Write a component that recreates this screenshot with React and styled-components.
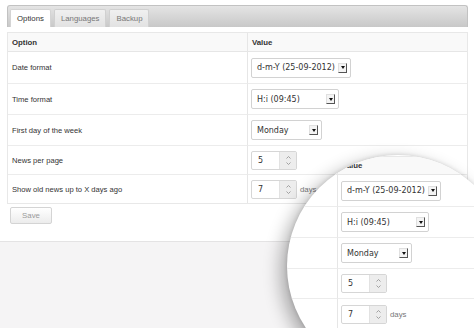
import React from 'react';
import styled, { createGlobalStyle } from 'styled-components';

const GlobalStyle = createGlobalStyle`
  html, body {
    margin: 0;
    padding: 0;
    background: #f5f4f5;
  }
  body {
    font-family: "Liberation Sans", Arial, sans-serif;
    color: #333;
    width: 474px;
    height: 328px;
    overflow: hidden;
    position: relative;
  }
`;

const Panel = styled.div`
  background: #fff;
  height: 242px;
  box-sizing: border-box;
  padding: 5px 6px 0 7px;
  border-bottom: 1px solid #e4e3e4;
`;

const TabBar = styled.div`
  display: flex;
  align-items: flex-end;
  gap: 3px;
  height: 22px;
  box-sizing: border-box;
  padding-left: 2px;
  border: 1px solid #c2c2c2;
  border-bottom: none;
  border-radius: 3px 3px 0 0;
  background: linear-gradient(#e4e4e4, #c8c8c8);
`;

const Tab = styled.div`
  height: 18px;
  box-sizing: border-box;
  padding: 0 6px;
  display: flex;
  align-items: center;
  font-size: 7.8px;
  color: ${p => (p.$active ? '#333' : '#777')};
  background: ${p => (p.$active ? '#fff' : 'linear-gradient(#f0f0f0, #e2e2e2)')};
  border: 1px solid ${p => (p.$active ? '#d4d4d4' : '#d0d0d0')};
  border-bottom: none;
  border-radius: 2px 2px 0 0;
`;

const Table = styled.div`
  display: grid;
  grid-template-columns: ${p => p.$first}px 1fr;
  margin-top: ${p => p.$top || 0}px;
  border: 1px solid #e8e8e8;
  border-right: ${p => (p.$open ? 'none' : '1px solid #e8e8e8')};
  border-left: ${p => (p.$open ? 'none' : '1px solid #e8e8e8')};
`;

const HeadCell = styled.div`
  height: ${p => p.$h || 18}px;
  box-sizing: border-box;
  display: flex;
  align-items: center;
  padding-left: 4px;
  font-size: 7.8px;
  font-weight: bold;
  color: #333;
  background: #f9f9f9;
  border-bottom: 1px solid #e6e6e6;
  & + & {
    border-left: 1px solid #e6e6e6;
  }
`;

const Cell = styled.div`
  height: ${p => p.$h}px;
  box-sizing: border-box;
  display: flex;
  align-items: center;
  gap: 3px;
  padding-left: ${p => (p.$value ? 3 : 4)}px;
  font-size: 7.6px;
  color: #333;
  border-top: ${p => (p.$first ? 'none' : '1px solid #ececec')};
  border-left: ${p => (p.$value ? '1px solid #e6e6e6' : 'none')};
`;

const SelectBox = styled.div`
  width: ${p => p.$w}px;
  height: 20px;
  box-sizing: border-box;
  display: flex;
  align-items: center;
  padding: 0 3px 0 5px;
  border: 1px solid #d2d2d2;
  border-radius: 2px;
  background: #fff;
  font-family: "DejaVu Sans", Verdana, sans-serif;
  font-size: 8px;
  color: #333;
  white-space: nowrap;
`;

const DropArrow = styled.span`
  margin-left: auto;
  width: 9px;
  height: 10px;
  box-sizing: border-box;
  border: 1px solid #e0e0e0;
  border-right-color: #555;
  border-bottom-color: #555;
  background: #f4f4f4;
  display: flex;
  align-items: center;
  justify-content: center;
  &::after {
    content: '';
    border-left: 2px solid transparent;
    border-right: 2px solid transparent;
    border-top: 3px solid #111;
  }
`;

const SpinBox = styled.div`
  width: 46px;
  height: 19px;
  box-sizing: border-box;
  display: flex;
  border: 1px solid #d6d6d6;
  border-radius: 2px;
  background: #fff;
  font-family: "DejaVu Sans", Verdana, sans-serif;
  font-size: 8px;
  color: #333;
`;

const SpinValue = styled.span`
  flex: 1;
  display: flex;
  align-items: center;
  padding-left: 6px;
`;

const SpinButtons = styled.span`
  width: 16px;
  background: #ededed;
  border-left: 1px solid #e2e2e2;
  display: flex;
  flex-direction: column;
  align-items: center;
  justify-content: center;
  gap: 3px;
`;

const Unit = styled.span`
  font-size: 7.8px;
  color: #777;
`;

const SaveButton = styled.div`
  width: 42px;
  height: 17px;
  box-sizing: border-box;
  margin: 3px 0 0 3px;
  display: flex;
  align-items: center;
  justify-content: center;
  font-size: 7.8px;
  color: #9a9a9a;
  border: 1px solid #d4d4d4;
  border-radius: 2px;
  background: linear-gradient(#ffffff, #ececec);
`;

const Loupe = styled.div`
  position: absolute;
  left: 287px;
  top: 155px;
  width: 222px;
  height: 222px;
  border-radius: 50%;
  overflow: hidden;
  background: #fff;
  box-shadow: -6px 6px 18px rgba(0, 0, 0, 0.32), 0 0 4px rgba(0, 0, 0, 0.14);
`;

const LoupeTable = styled.div`
  margin-top: 1px;
`;

const Chevron = ({ up }) => (
  <svg width="5" height="3" viewBox="0 0 5 3">
    <path
      d={up ? 'M0.5 2.5 L2.5 0.5 L4.5 2.5' : 'M0.5 0.5 L2.5 2.5 L4.5 0.5'}
      fill="none"
      stroke="#999"
      strokeWidth="0.9"
    />
  </svg>
);

const Select = ({ w, children }) => (
  <SelectBox $w={w}>
    {children}
    <DropArrow />
  </SelectBox>
);

const Spinner = ({ value }) => (
  <SpinBox>
    <SpinValue>{value}</SpinValue>
    <SpinButtons>
      <Chevron up />
      <Chevron />
    </SpinButtons>
  </SpinBox>
);

const rows = [
  { label: 'Date format', h: 31, value: <Select w={100}>d-m-Y (25-09-2012)</Select> },
  { label: 'Time format', h: 31, value: <Select w={88}>H:i (09:45)</Select> },
  { label: 'First day of the week', h: 31, value: <Select w={71}>Monday</Select> },
  { label: 'News per page', h: 29, value: <Spinner value="5" /> },
  {
    label: 'Show old news up to X days ago',
    h: 29,
    value: (
      <>
        <Spinner value="7" />
        <Unit>days</Unit>
      </>
    ),
  },
];

const OptionsTable = ({ first, top, open, heights, showLabels, headH }) => (
  <Table $first={first} $top={top} $open={open}>
    <HeadCell $h={headH}>{showLabels ? 'Option' : ''}</HeadCell>
    <HeadCell $h={headH}>Value</HeadCell>
    {rows.map((r, i) => (
      <React.Fragment key={r.label}>
        <Cell $h={heights ? heights[i] : r.h} $first={i === 0}>
          {showLabels ? r.label : ''}
        </Cell>
        <Cell $h={heights ? heights[i] : r.h} $first={i === 0} $value>
          {r.value}
        </Cell>
      </React.Fragment>
    ))}
  </Table>
);

export default function App() {
  return (
    <>
      <GlobalStyle />
      <Panel>
        <TabBar>
          <Tab $active>Options</Tab>
          <Tab>Languages</Tab>
          <Tab>Backup</Tab>
        </TabBar>
        <OptionsTable first={239} top={5} showLabels headH={19} />
        <SaveButton>Save</SaveButton>
      </Panel>
      <Loupe>
        <LoupeTable>
          <OptionsTable
            first={50}
            open
            headH={18}
            heights={[31, 31, 31, 30, 31]}
          />
        </LoupeTable>
      </Loupe>
    </>
  );
}
